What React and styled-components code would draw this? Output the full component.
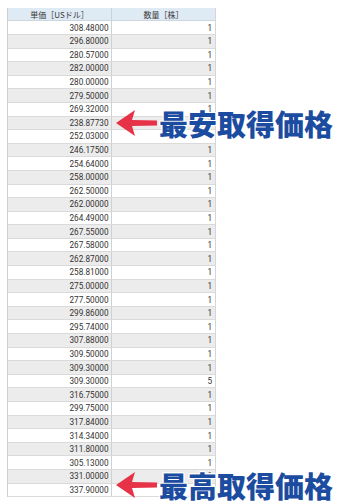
import React from "react";
import styled, { createGlobalStyle } from "styled-components";

const Global = createGlobalStyle`
  html, body { margin: 0; padding: 0; background: #fff; }
  body { font-family: Roboto, "Noto Sans CJK JP", sans-serif; }
`;

const Page = styled.div`
  position: relative;
  width: 350px;
  height: 504px;
  padding: 8px 0 0 7px;
  box-sizing: border-box;
`;

const Table = styled.div`
  width: 209px;
  display: flex;
  flex-direction: column;
  border-left: 1px solid #cfcfcf;
  border-right: 1px solid #d6d6d6;
  box-sizing: border-box;
`;

const HeadRow = styled.div`
  display: flex;
  height: 13.4px;
  background: #deeaf4;
  border-bottom: 1px solid #cfd6dc;
  box-sizing: border-box;
`;

const HeadCell = styled.div`
  flex: 1 1 0;
  font-family: "Noto Sans CJK JP", sans-serif;
  font-size: 8px;
  color: #3a3a3a;
  display: flex;
  align-items: center;
  justify-content: center;
  border-right: ${(p) => (p.$first ? "1px solid #c9d3dc" : "none")};
`;

const Row = styled.div`
  display: flex;
  height: 13.6px;
  background: ${(p) => (p.$alt ? "#ececec" : "#ffffff")};
  border-bottom: 1px solid #dadada;
  box-sizing: border-box;
`;

const Cell = styled.div`
  flex: 1 1 0;
  font-family: Roboto, sans-serif;
  font-size: 8.2px;
  color: #333333;
  display: flex;
  align-items: center;
  justify-content: flex-end;
  padding-right: ${(p) => (p.$first ? "2px" : "3px")};
  border-right: ${(p) => (p.$first ? "1px solid #d0d0d0" : "none")};
`;

const Note = styled.div`
  position: absolute;
  left: 116px;
  top: ${(p) => p.$top}px;
  display: flex;
  align-items: center;
  gap: 1px;
`;

const NoteText = styled.span`
  font-family: "Noto Sans CJK JP", sans-serif;
  font-weight: 900;
  font-size: 29px;
  line-height: 30px;
  color: #1c4c9f;
  text-shadow: 1px 0 0 #fff, -1px 0 0 #fff, 0 1px 0 #fff, 0 -1px 0 #fff,
    1px 1px 0 #fff, -1px -1px 0 #fff, 1px -1px 0 #fff, -1px 1px 0 #fff;
`;

const Arrow = () => (
  <svg width="42" height="28" viewBox="0 0 42 28">
    <path
      d="M0 14 L19 1 L16 11 L41 11.5 L41 16.5 L16 17 L19 27 Z"
      fill="#e63347"
    />
  </svg>
);

const rows = [
  ["308.48000", 1], ["296.80000", 1], ["280.57000", 1], ["282.00000", 1],
  ["280.00000", 1], ["279.50000", 1], ["269.32000", 1], ["238.87730", 1],
  ["252.03000", 1], ["246.17500", 1], ["254.64000", 1], ["258.00000", 1],
  ["262.50000", 1], ["262.00000", 1], ["264.49000", 1], ["267.55000", 1],
  ["267.58000", 1], ["262.87000", 1], ["258.81000", 1], ["275.00000", 1],
  ["277.50000", 1], ["299.86000", 1], ["295.74000", 1], ["307.88000", 1],
  ["309.50000", 1], ["309.30000", 1], ["309.30000", 5], ["316.75000", 1],
  ["299.75000", 1], ["317.84000", 1], ["314.34000", 1], ["311.80000", 1],
  ["305.13000", 1], ["331.00000", 1], ["337.90000", 1],
];

export default function App() {
  return (
    <>
      <Global />
      <Page>
        <Table>
          <HeadRow>
            <HeadCell $first>単価［USドル］</HeadCell>
            <HeadCell>数量［株］</HeadCell>
          </HeadRow>
          {rows.map(([p, q], i) => (
            <Row key={i} $alt={i % 2 === 1}>
              <Cell $first>{p}</Cell>
              <Cell>{q}</Cell>
            </Row>
          ))}
        </Table>
        <Note $top={108}>
          <Arrow />
          <NoteText>最安取得価格</NoteText>
        </Note>
        <Note $top={470}>
          <Arrow />
          <NoteText>最高取得価格</NoteText>
        </Note>
      </Page>
    </>
  );
}
